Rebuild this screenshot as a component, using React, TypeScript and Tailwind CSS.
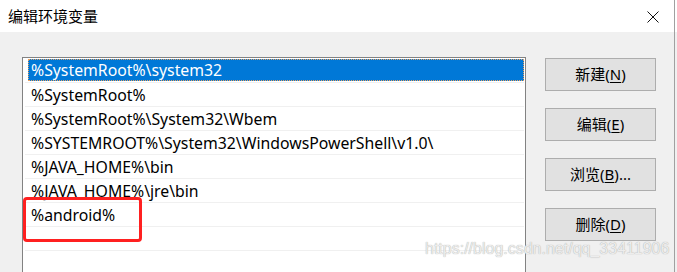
const rows = [
  "%SystemRoot%\\system32",
  "%SystemRoot%",
  "%SystemRoot%\\System32\\Wbem",
  "%SYSTEMROOT%\\System32\\WindowsPowerShell\\v1.0\\",
  "%JAVA_HOME%\\bin",
  "%JAVA_HOME%\\jre\\bin",
  "%android%",
  "",
  "",
];

const buttons = [
  { label: "新建", key: "N", tail: "" },
  { label: "编辑", key: "E", tail: "" },
  { label: "浏览", key: "B", tail: "..." },
  { label: "删除", key: "D", tail: "" },
];

const font = "font-['Noto_Sans','Noto_Sans_CJK_SC',sans-serif]";

export default function App() {
  return (
    <div
      className={`relative w-[677px] h-[272px] overflow-hidden bg-[#f0f0f0] text-black ${font}`}
    >
      <div className="flex h-8 items-center justify-between bg-white pl-2 pr-[18px]">
        <span className="text-[15px] leading-none">编辑环境变量</span>
        <svg width="12" height="12" viewBox="0 0 12 12" className="mt-[1px]">
          <path d="M0.5 0.5 L11.5 11.5 M11.5 0.5 L0.5 11.5" stroke="#111" strokeWidth="1" />
        </svg>
      </div>

      <div className="flex pl-[22px] pt-[25px]">
        <div className="h-[240px] w-[504px] border border-b-0 border-[#828282] bg-white pl-[2px] pr-[1px]">
          {rows.map((r, i) => (
            <div
              key={i}
              className="h-[24px] border-b border-[#f0f0f0] text-[15.8px] leading-[22px]"
            >
              {i === 0 ? (
                <div className="ml-[3px] h-[22px] mt-[1px] bg-[#0078d7] pl-[3px] text-white outline outline-1 outline-dotted outline-[#e8a060] -outline-offset-1">
                  {r}
                </div>
              ) : (
                <div className="pl-[6px] pt-[1px]">{r}</div>
              )}
            </div>
          ))}
        </div>

        <div className="ml-[19px] flex flex-col gap-[17px] pt-[1px]">
          {buttons.map((b) => (
            <button
              key={b.key}
              className="flex h-[33px] w-[111px] items-center justify-center border border-[#adadad] bg-[#e1e1e1] text-[15px]"
            >
              {b.label}(<span className="underline underline-offset-2">{b.key}</span>){b.tail}
            </button>
          ))}
        </div>
      </div>

      <div className="absolute right-[2px] top-0 h-full w-px bg-[#a0a0a0]" />

      <div className="absolute left-[23px] top-[197px] h-[45px] w-[119px] rounded-[4px] border-[3px] border-[#ff2020]" />

      <div className="absolute left-[425px] top-[241px] font-['Liberation_Sans',sans-serif] text-[16px] leading-none text-[#ededed] [text-shadow:0_0_1px_#9a9a9a]">
        https://blog.csdn.net/qq_33411906
      </div>
    </div>
  );
}
